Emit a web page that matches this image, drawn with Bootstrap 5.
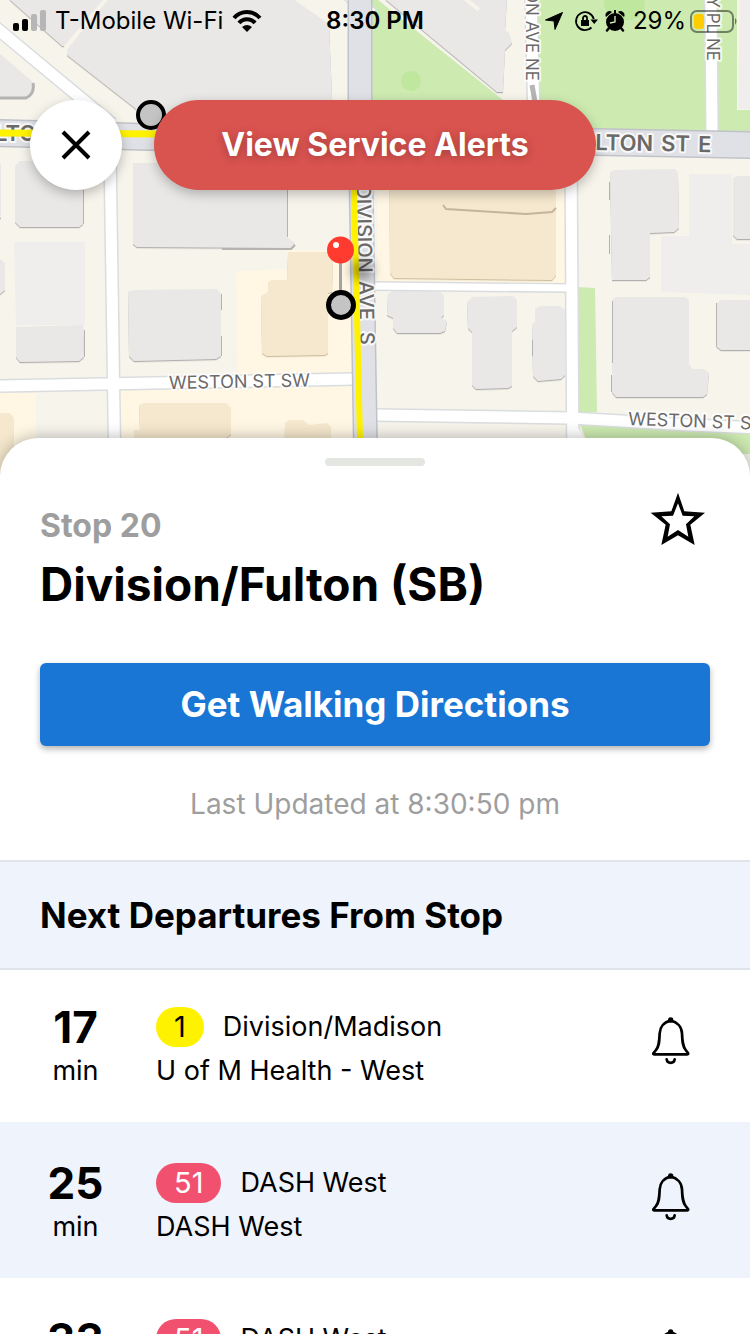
<!DOCTYPE html>
<html lang="en">
<head>
<meta charset="utf-8">
<meta name="viewport" content="width=device-width, initial-scale=1">
<title>Division/Fulton (SB)</title>
<link href="https://cdn.jsdelivr.net/npm/bootstrap@5.3.0/dist/css/bootstrap.min.css" rel="stylesheet">
<style>
  body { font-family: Inter, "Liberation Sans", sans-serif; color: #000; background: #fff; }
  .hero { height: 438px; }
  .map { top: 0; left: 0; height: 478px; width: 100%; background: #f6f4eb; }
  .map text { font-family: Inter, sans-serif; fill: #6b6968; stroke: #fff; stroke-opacity: .8; stroke-width: 4px; paint-order: stroke; stroke-linejoin: round; }
  .status { height: 42px; font-size: 24px; line-height: 42px; padding: 0 12px; }
  .status-side { flex: 1 1 0; }
  .top-actions { gap: 32px; padding: 58px 30px 0; }
  .round-btn { width: 92px; height: 90px; background: #fff; box-shadow: 0 4px 12px rgba(0,0,0,.25); }
  .alert-btn, .alert-btn:hover { width: 442px; height: 90px; background: #d9534f; color: #fff; font-size: 32px; font-weight: 700; text-shadow: 0 2px 8px rgba(0,0,0,.25); box-shadow: 0 4px 12px rgba(0,0,0,.25); }
  .sheet { border-radius: 38px 38px 0 0; box-shadow: 0 0 16px rgba(0,0,0,.3); min-height: 0; }
  .grip { width: 100px; height: 8px; background: #e4e6e1; margin: 20px auto 0; }
  .stop-head { padding: 26px 44px 0 40px; }
  .stop-no { font-size: 32px; line-height: 40px; color: #9e9e9e; margin-top: 14px; }
  .stop-name { font-size: 46px; line-height: 56px; margin: 10px 0 0; }
  .walk { padding: 0 40px; margin-top: 51px; }
  .walk-btn, .walk-btn:hover { height: 83px; background: #1976d5; color: #fff; font-size: 35px; font-weight: 700; border-radius: 6px; box-shadow: 0 3px 6px rgba(0,0,0,.3); }
  .updated { font-size: 28px; line-height: 40px; color: #9e9e9e; margin: 38px 0 36px; }
  .band { background: #eff3fb; border-top: 2px solid #e0e4ea; border-bottom: 2px solid #e0e4ea; font-size: 35px; line-height: 44px; padding: 31px 40px; margin: 0; }
  .departures { min-height: 0; overflow-y: auto; scrollbar-width: none; }
  .dep { height: 156px; flex: none; padding: 41px 58px 0 0; }
  .dep:first-child { height: 152px; padding-top: 37px; }
  .dep:nth-child(even) { background: #eff3fb; }
  .eta { width: 151px; margin-right: 5px; }
  .eta-num { font-size: 44px; line-height: 40px; }
  .dep-text { font-size: 27px; line-height: 40px; }
  .route { height: 40px; border-radius: 20px; padding: 0 18px; font-size: 29px; margin-right: 19px; }
  .route-1 { background: #fff200; }
  .route-51 { background: #f1516f; color: #fff; }
  .bell { margin-top: 9px; }
</style>
<script src="https://cdn.jsdelivr.net/npm/bootstrap@5.3.0/dist/js/bootstrap.bundle.min.js"></script>
</head>
<body>
<svg class="d-none">
  <symbol id="bell" viewBox="90 80 126 150">
    <g fill="none" stroke="#000" stroke-width="8" stroke-linecap="round" stroke-linejoin="round">
      <path d="M152 94C132 98 120 113 119 132C118 158 117 172 108 182L100 192Q99 195 103 195H202Q206 195 204 191L197 182C188 170 187 158 186 132C185 113 172 98 152 94Z"/>
      <path d="M140 210C142 224 162 224 164 210"/>
    </g>
    <circle cx="152" cy="92" r="8"/>
  </symbol>
</svg>
<div class="vh-100 d-flex flex-column overflow-hidden">
  <header class="hero position-relative flex-shrink-0">
    <svg class="map position-absolute" viewBox="0 0 750 478" preserveAspectRatio="xMidYMin slice" role="img" aria-label="Map around the stop">
      <defs>
        <filter id="soft" x="-100%" y="-100%" width="300%" height="300%"><feGaussianBlur stdDeviation="6"/></filter>
        <filter id="edge"><feDropShadow dx="0" dy="1.200" stdDeviation="0" flood-color="#b0afad"/></filter>
        <filter id="edge-warm"><feDropShadow dx="0" dy="1.200" stdDeviation="0" flood-color="#cdbf9f"/></filter>
      </defs>
      <!-- ground areas -->
      <path fill="#fff6e3" d="M377 150H566V283H377ZM236 271L287 269V250H354V373L238 374ZM120 390L355 386V478H122ZM0 393H36V478H0Z"/>
      <path fill="#cdeab1" d="M371 0H378L503 100V129H371ZM538 0H737V110H750V132L538 128ZM577 287L595 288L597 412H578ZM580 424L750 432V454H592Z"/>
      <path fill="#f6f4eb" d="M502 92H525V129H515Z"/>
      <circle cx="411" cy="81" r="10" fill="#bfe79d"/>
      <path fill="#bfe79d" d="M604 0H644C648 14 636 21 626 20C612 20 603 12 604 0Z"/>
      <!-- buildings -->
      <g fill="#e9e8e6" filter="url(#edge)">
        <path d="M385 -1L497 92H503L505 50L512 43L509 33L505 30L507 -1Z"/>
        <path d="M67 55V50L107 -1H293L329 24L333 120H141L136 109Z"/>
        <path d="M9 -1L62 46H67L104 -1Z"/>
        <path d="M15 166L20 161H79L83 165V224L79 227H20L15 222Z"/>
        <path d="M-1 258L5 263V290L-1 295ZM-1 164H1V218H-1Z"/>
        <path d="M16 327L83 325L84 357L79 361L20 362L16 357Z"/>
        <path d="M128 292L134 290L217 289L221 294V356L216 359L134 361L129 356Z"/>
        <path d="M133 163H287V237L295 243L292 248L137 247L133 244Z"/>
        <path d="M610 172L615 170L675 169L678 173L679 228L674 232L650 233V277L646 280H612Z"/>
        <path d="M733 178L737 176H751V239H737L733 235Z"/>
        <path d="M612 300L616 297H685L689 300V364L692 369H704L709 373L707 394L703 397H616L612 392Z"/>
        <path d="M717 303L721 300H751V350H721L716 346Z"/>
        <path d="M388 294L393 291H439L444 295V315L441 318L447 321L445 331L440 333H397L393 328V318L387 315Z"/>
        <path d="M467 302L472 297L513 296L517 300V327L512 331V386L508 388L476 389L472 385V332L468 328Z"/>
        <path d="M535 309L540 306H560L565 310V375L561 379L538 381L533 376L532 324L535 322Z"/>
      </g>
      <path fill="#e9e8e6" d="M-1 53L33 82Q36 92 26 98H-1Z"/>
      <path fill="none" stroke="#b4b3b1" stroke-width="3" d="M-1 98H26Q35 94 33 83"/>
      <path fill="none" stroke="#b4b3b1" stroke-width="1" d="M83.500 190V224M221.500 294V310M221.500 336V356M84.500 330V357M287.500 163V237M612.500 301V363M611.500 375V392M609.500 182V200M609.500 235V254M716.500 303V346M532.500 340V356"/>
      <path fill="none" stroke="#b4b3b1" stroke-width="2" d="M222 249H291L295 245"/>
      <path fill="#efeeec" d="M14 242H85V325H16ZM740 0H750V109H738ZM689 174H732V244H750V295L661 292V236H689Z"/>
      <path fill="none" stroke="#f6f4eb" stroke-width="4" d="M65 48L107 -2M461 -5L479 10"/>
      <g fill="#f6e8ce" filter="url(#edge-warm)">
        <path d="M389 150H556V275L552 280L394 278L390 273Z"/>
        <path d="M288 252H327L333 262L332 292L328 293V353L325 355L267 356L262 353L261 296L268 292V282L272 280H287Z"/>
        <path d="M139 405L144 403H226L231 408V434L226 438V478H134V430H140Z"/>
        <path d="M285 423L289 420H303L309 425L327 423L331 427V478H284Z"/>
        <path d="M-1 413H10L14 418V478H-1Z"/>
      </g>
      <path fill="none" stroke="#c3b59b" stroke-width="2" d="M443 205L446 209L526 214L552 212L556 208"/>
      <!-- minor streets: casing, then surface -->
      <g fill="none" stroke="#dadddf" stroke-width="14">
        <path d="M-6 26L112 124M110 150L115 480M-5 386L354 379M571 150L573 480M374 415L570 418L690 425L760 428M531 -5L534 120M711 -5L712 134M330 -20L372 14"/>
        <path stroke-width="10" d="M374 286L567 288"/>
      </g>
      <g fill="none" stroke="#fff" stroke-width="11">
        <path d="M-6 26L112 124M110 150L115 480M-5 386L354 379M571 150L573 480M374 415L570 418L690 425L760 428M531 -5L534 120M711 -5L712 134M330 -20L372 14"/>
        <path stroke-width="7" d="M374 286L571 288"/>
        <path fill="#fff" stroke="none" d="M576 424L588 446V478H574Z"/>
      </g>
      <!-- main streets -->
      <path fill="none" stroke="#bfc2c8" stroke-width="28" d="M-5 133L150 137L595 142L755 145"/>
      <path fill="none" stroke="#bfc2c8" stroke-width="25" d="M360 -5V120L366 480"/>
      <path fill="none" stroke="#e0e1e6" stroke-width="25" d="M-5 133L150 137L595 142L755 145"/>
      <path fill="none" stroke="#e0e1e6" stroke-width="22" d="M360 -5V120L366 480"/>
      <path stroke="#b5b5b5" stroke-width="5" d="M532 85L535 102"/>
      <!-- street names -->
      <text x="-5" y="141" font-size="22" font-weight="600">LTO</text>
      <path fill="none" stroke="#fff200" stroke-width="7" d="M-5 133L165 134"/>
      <g font-size="22" font-weight="600">
        <text text-anchor="end" transform="translate(653 151) rotate(1)">FULTON</text>
        <text transform="translate(661 151) rotate(1)">ST</text>
        <text transform="translate(698 152) rotate(1)">E</text>
      </g>
      <g font-size="20" font-weight="500">
        <text text-anchor="end" transform="translate(358 273) rotate(89)">DIVISION</text>
        <text transform="translate(359 281) rotate(89)">AVE</text>
        <text transform="translate(360 332) rotate(89)">S</text>
      </g>
      <path stroke="#fff200" stroke-width="6" d="M353 150L361 480"/>
      <text font-size="18" transform="translate(169 389) rotate(-1)">WESTON ST SW</text>
      <text font-size="18" transform="translate(628 425) rotate(2)">WESTON ST SE</text>
      <text font-size="17" text-anchor="end" transform="translate(526 81) rotate(90)">DIVISION AVE NE</text>
      <text font-size="17" text-anchor="end" transform="translate(707 61) rotate(90)">LIBRARY PL NE</text>
      <!-- stops and pin -->
      <ellipse cx="362" cy="270" rx="11" ry="10" opacity=".4" filter="url(#soft)"/>
      <circle cx="151" cy="115" r="13" fill="#c4c4c4" stroke="#000" stroke-width="4"/>
      <path stroke="#a3a3a3" stroke-width="3" d="M340.500 260V292"/>
      <circle cx="340.500" cy="250" r="13.500" fill="#ff3b30"/>
      <circle cx="336" cy="245" r="3" fill="#fff"/>
      <circle cx="341" cy="305" r="12.500" fill="#c4c4c4" stroke="#000" stroke-width="5"/>
    </svg>

    <div class="status position-relative d-flex align-items-center">
      <div class="status-side d-flex align-items-center">
        <svg class="me-2" width="35" height="22" viewBox="0 0 35 22" aria-hidden="true"><rect x="1" y="13" width="6" height="8" rx="2"/><rect x="10" y="9" width="6" height="12" rx="2"/><g fill="#b6b6b6"><rect x="19" y="4" width="6" height="17" rx="2"/><rect x="28" width="6" height="21" rx="2"/></g></svg>
        <span>T-Mobile Wi-Fi</span>
        <svg class="ms-2" width="32" height="24" viewBox="0 0 32 24" aria-hidden="true"><g fill="none" stroke="#000" stroke-width="4"><path d="M3 9C10 1 22 1 29 9"/><path d="M8 14C12 9 20 9 24 14"/></g><path d="M16 23L11 18Q16 14 21 18Z"/></svg>
      </div>
      <div class="fw-semibold">8:30 PM</div>
      <div class="status-side d-flex align-items-center justify-content-end">
        <svg width="18" height="18" viewBox="0 0 18 18" aria-hidden="true"><path stroke="#000" stroke-linejoin="round" d="M17.500 .5L10 17.500L9 9L.5 8Z"/></svg>
        <svg class="ms-2" width="30" height="22" viewBox="0 0 30 22" aria-hidden="true"><path fill="none" stroke="#000" stroke-width="1.800" d="M20.500 17.500A9 9 0 1 1 22.800 9"/><path d="M19.500 9.500H27L23.200 14ZM10 10H18V16H10Z"/><path fill="none" stroke="#000" stroke-width="1.800" d="M12 11V8A2 2 0 0 1 16 8V11"/></svg>
        <svg class="ms-1 me-2" width="20" height="22" viewBox="1 0 20 22" aria-hidden="true"><circle cx="11" cy="12" r="9"/><path stroke="#000" stroke-width="2.500" stroke-linecap="round" d="M5 18L3 20.500M17 18L19 20.500"/><path d="M2 7A4 4 0 0 1 8 2ZM20 7A4 4 0 0 0 14 2ZM10 0H12V4H10Z"/><path fill="none" stroke="#cdeab1" stroke-width="1.400" d="M11 6V12L6 13"/></svg>
        <span>29%</span>
        <svg class="ms-1" width="48" height="23" viewBox="0 0 48 23" aria-hidden="true"><rect x="1" y="1" width="42" height="21" rx="6" fill="none" stroke="#000" stroke-opacity=".45" stroke-width="2"/><rect x="4" y="4" width="10" height="15" rx="3" fill="#fc0"/><path fill="#000" fill-opacity=".5" d="M45 8Q48 11 45 15Z"/></svg>
      </div>
    </div>
    <div class="top-actions position-relative d-flex">
      <button type="button" class="round-btn btn rounded-circle p-0 border-0 d-flex align-items-center justify-content-center" aria-label="Close">
        <svg width="30" height="30" viewBox="0 0 30 30"><path stroke="#000" stroke-width="4" d="M2 2L28 28M28 2L2 28"/></svg>
      </button>
      <button type="button" class="alert-btn btn rounded-pill p-0 border-0">View Service Alerts</button>
    </div>
  </header>

  <main class="sheet bg-white position-relative flex-grow-1 d-flex flex-column overflow-hidden">
    <div class="grip rounded-pill flex-shrink-0"></div>
    <div class="stop-head d-flex align-items-start justify-content-between">
      <div>
        <p class="stop-no fw-bold mb-0">Stop 20</p>
        <h1 class="stop-name fw-bold">Division/Fulton (SB)</h1>
      </div>
      <button type="button" class="btn p-0 border-0 lh-1" aria-label="Save stop">
        <svg width="56" height="54" viewBox="449 188 168 162"><path fill-rule="evenodd" d="M533 190L552 246L614 250L570 286L583 347L533 318L483 347L496 286L451 250L513 246ZM533 222L518 259L483 261L509 285L502 322L533 302L564 322L557 285L582 261L547 259Z"/></svg>
      </button>
    </div>
    <div class="walk flex-shrink-0">
      <button type="button" class="walk-btn btn w-100 p-0 border-0">Get Walking Directions</button>
    </div>
    <p class="updated text-center">Last Updated at 8:30:50 pm</p>
    <h2 class="band fw-bold">Next Departures From Stop</h2>
    <ul class="departures list-unstyled mb-0 flex-grow-1 d-flex flex-column">
      <li class="dep d-flex align-items-start">
        <div class="eta text-center"><div class="eta-num fw-bold">17</div><div class="dep-text mt-1">min</div></div>
        <div class="dep-text flex-grow-1">
          <div class="d-flex"><span class="route route-1">1</span><span>Division/Madison</span></div>
          <div class="mt-1">U of M Health - West</div>
        </div>
        <button type="button" class="bell btn p-0 border-0 lh-1" aria-label="Notify me"><svg width="42" height="50"><use href="#bell"/></svg></button>
      </li>
      <li class="dep d-flex align-items-start">
        <div class="eta text-center"><div class="eta-num fw-bold">25</div><div class="dep-text mt-1">min</div></div>
        <div class="dep-text flex-grow-1">
          <div class="d-flex"><span class="route route-51">51</span><span>DASH West</span></div>
          <div class="mt-1">DASH West</div>
        </div>
        <button type="button" class="bell btn p-0 border-0 lh-1" aria-label="Notify me"><svg width="42" height="50"><use href="#bell"/></svg></button>
      </li>
      <li class="dep d-flex align-items-start">
        <div class="eta text-center"><div class="eta-num fw-bold">33</div><div class="dep-text mt-1">min</div></div>
        <div class="dep-text flex-grow-1">
          <div class="d-flex"><span class="route route-51">51</span><span>DASH West</span></div>
          <div class="mt-1">DASH West</div>
        </div>
        <button type="button" class="bell btn p-0 border-0 lh-1" aria-label="Notify me"><svg width="42" height="50"><use href="#bell"/></svg></button>
      </li>
    </ul>
  </main>
</div>
</body>
</html>
